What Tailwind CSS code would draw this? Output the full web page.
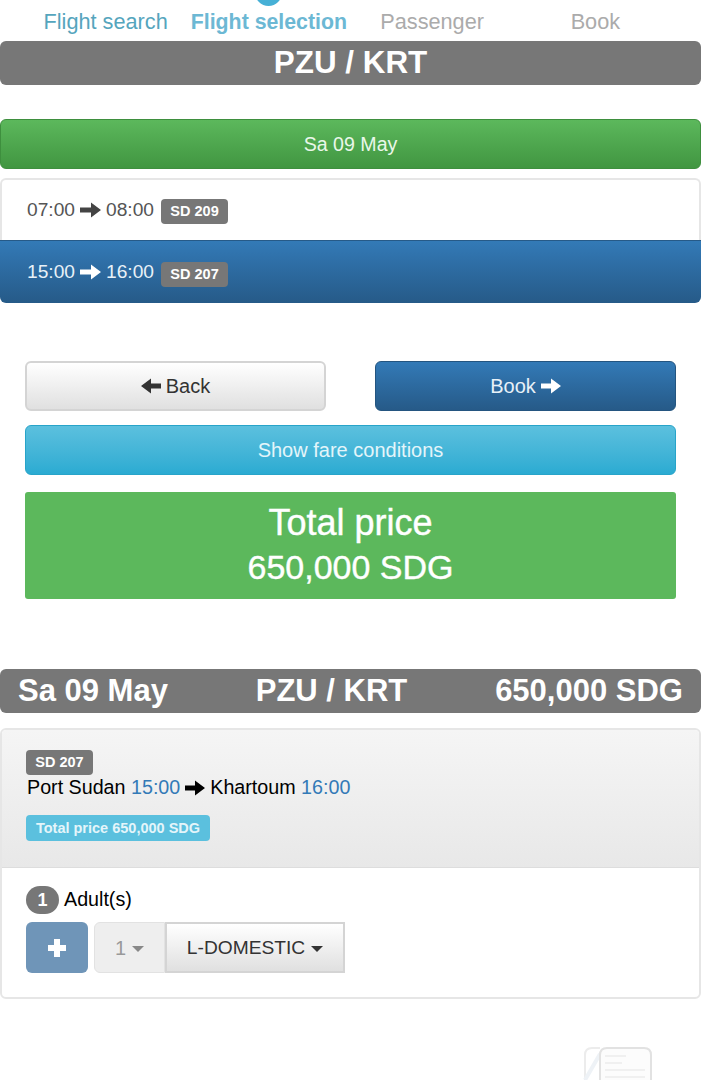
<!DOCTYPE html>
<html lang="en">
<head>
  <meta charset="UTF-8" />
  <meta name="viewport" content="width=device-width, initial-scale=1.0" />
  <title>Flight selection</title>
  <script src="https://cdn.jsdelivr.net/npm/@tailwindcss/browser@4"></script>
</head>
<body class="bg-white font-['Liberation_Sans',Arial,sans-serif] text-[20px] text-[#333] w-[701px] h-[1080px] overflow-hidden relative">

  <!-- Wizard steps -->
  <div class="absolute left-[255px] top-[-21px] w-[27px] h-[27px] rounded-full bg-[#46b0d6]"></div>
  <div class="grid grid-cols-4 px-6 h-[41px] pt-[8px] text-[21.7px] leading-[28px] text-center">
    <div class="text-[#55a5bd] whitespace-nowrap">Flight search</div>
    <div class="text-[#6cb8d4] font-bold text-[21.3px] whitespace-nowrap">Flight selection</div>
    <div class="text-[#ababab]">Passenger</div>
    <div class="text-[#ababab]">Book</div>
  </div>

  <div class="h-[44px] rounded-md bg-[#777] text-white text-[31.4px] font-bold leading-[44px] text-center">PZU / KRT</div>

  <!-- Date -->
  <div class="mt-[34px] h-[50px] rounded-md border border-[#3e8f3e] bg-gradient-to-b from-[#5cb85c] to-[#419641] text-[#e9f7e9] text-[19.6px] leading-[49px] text-center">Sa 09 May</div>

  <!-- Flights list -->
  <div class="mt-[9px] h-[125px] flex flex-col">
    <div class="h-[62px] flex items-center gap-[5px] pl-[25px] rounded-t-md border-t-2 border-x-2 border-[#e6e6e6] bg-white text-[#555] text-[19.2px]">
      <span>07:00</span>
      <svg class="w-[21px] h-[18px]" viewBox="0 0 21 18"><path d="M0 6.500h11V1.500l10 7.500-10 7.500v-5H0z" fill="#444"/></svg>
      <span>08:00</span>
      <span class="mt-[2px] ml-[2px] bg-[#777] text-white text-[14.5px] font-bold rounded-[4px] h-[25px] w-[67px] leading-[25px] text-center">SD 209</span>
    </div>
    <div class="h-[63px] pl-[27px] flex items-center gap-[5px] rounded-b-md border-t border-[#265a88] bg-gradient-to-b from-[#337ab7] to-[#265a88] text-[#e8f1f8] text-[19.2px]">
      <span>15:00</span>
      <svg class="w-[21px] h-[18px]" viewBox="0 0 21 18"><path d="M0 6.500h11V1.500l10 7.500-10 7.500v-5H0z" fill="#fff"/></svg>
      <span>16:00</span>
      <span class="mt-[4px] ml-[2px] bg-[#777] text-white text-[14.5px] font-bold rounded-[4px] h-[25px] w-[67px] leading-[25px] text-center">SD 207</span>
    </div>
  </div>

  <!-- Actions -->
  <div class="mt-[58px] px-[25px]">
    <div class="flex justify-between">
      <button class="w-[301px] h-[50px] rounded-md border-2 border-[#d4d4d4] bg-gradient-to-b from-white to-[#e0e0e0] text-[#333] flex items-center justify-center gap-[5px]">
        <svg class="w-[20px] h-[18px]" viewBox="0 0 20 18"><path d="M20 6.500H10V1.500L0 9l10 7.500v-5h10z" fill="#333"/></svg>
        <span>Back</span>
      </button>
      <button class="w-[301px] h-[50px] rounded-md border border-[#245580] bg-gradient-to-b from-[#337ab7] to-[#265a88] text-[#e8f1f8] flex items-center justify-center gap-[5px]">
        <span>Book</span>
        <svg class="w-[20px] h-[18px]" viewBox="0 0 20 18"><path d="M0 6.500h10V1.500L20 9l-10 7.500v-5H0z" fill="#fff"/></svg>
      </button>
    </div>
    <button class="mt-[14px] w-full h-[50px] rounded-md border border-[#28a4c9] bg-gradient-to-b from-[#5bc0de] to-[#2aabd2] text-[#e4f5fa] text-center">Show fare conditions</button>
    <div class="mt-[17px] h-[107px] rounded-[3px] bg-[#5cb85c] text-white text-[34px] leading-[45px] text-center pt-[8px] [-webkit-text-stroke:0.4px_white]">
      <div class="text-[36px]">Total price</div>
      <div>650,000 SDG</div>
    </div>
  </div>

  <!-- Summary -->
  <div class="mt-[70px] h-[44px] rounded-md bg-[#777] text-white text-[31px] font-bold leading-[44px] flex justify-between px-[18px]">
    <span>Sa 09 May</span>
    <span>PZU / KRT</span>
    <span>650,000 SDG</span>
  </div>

  <div class="mt-[15px] h-[271px] rounded-md border-2 border-[#e6e6e6] overflow-hidden">
    <div class="h-[138px] border-b border-[#ddd] bg-gradient-to-b from-[#f5f5f5] to-[#e8e8e8] pl-[24px] pt-[20px]">
      <div class="bg-[#777] text-white text-[14.5px] font-bold rounded-[4px] h-[25px] w-[67px] leading-[25px] text-center">SD 207</div>
      <div class="flex items-center gap-[5px] text-black text-[19.7px] h-[28px] -mt-[1px]">
        <span class="ml-[1px]">Port Sudan <span class="text-[#337ab7]">15:00</span></span>
        <svg class="w-[20px] h-[18px]" viewBox="0 0 20 18"><path d="M0 6.500h10V1.500L20 9l-10 7.500v-5H0z" fill="#000"/></svg>
        <span>Khartoum <span class="text-[#337ab7]">16:00</span></span>
      </div>
      <div class="mt-[13px] bg-[#5bc0de] text-[#e4f5fa] text-[14.5px] font-bold rounded-[4px] h-[26px] w-[184px] leading-[26px] text-center">Total price 650,000 SDG</div>
    </div>
    <div class="pl-[24px] pt-[18px]">
      <div class="flex items-center gap-[5px] text-black text-[19.7px] h-[28px]">
        <span class="w-[33px] h-[28px] rounded-full bg-[#777] text-white text-[18px] font-bold leading-[28px] text-center">1</span>
        <span>Adult(s)</span>
      </div>
      <div class="flex mt-[8px]">
        <button class="w-[62px] h-[51px] rounded-md bg-[#6f95b8] flex items-center justify-center">
          <svg class="w-[20px] h-[20px]" viewBox="0 0 20 20"><path d="M7 1h6v6h6v6h-6v6H7v-6H1V7h6z" fill="#fff"/></svg>
        </button>
        <div class="ml-[6px] w-[71px] h-[51px] rounded-l-md border border-[#e2e2e2] bg-[#eee] text-[#999] flex items-center justify-center gap-[6px]">
          <span class="pt-[1px]">1</span>
          <span class="mt-[2px] w-0 h-0 border-x-[6px] border-x-transparent border-t-[6px] border-t-[#888]"></span>
        </div>
        <div class="w-[180px] h-[51px] border-2 border-[#d4d4d4] bg-gradient-to-b from-white to-[#e0e0e0] text-[#333] text-[19.2px] flex items-center justify-center gap-[6px]">
          <span class="pt-[2px]">L-DOMESTIC</span>
          <span class="mt-[2px] w-0 h-0 border-x-[6px] border-x-transparent border-t-[6px] border-t-[#333]"></span>
        </div>
      </div>
    </div>
  </div>

  <!-- Faint watermark icon -->
  <svg class="absolute left-[582px] top-[1046px] w-[72px] h-[34px]" viewBox="0 0 72 34" fill="none">
    <path d="M18 2H10Q3 2 3 9V34" stroke="#ececec" stroke-width="2"/>
    <path d="M3 34L18 8" stroke="#eef2f6" stroke-width="4"/>
    <path d="M18 34V9Q18 2 25 2H62Q69 2 69 9V34" stroke="#e2e2e2" stroke-width="2" fill="#fcfcfc"/>
    <path d="M23 10H44M23 17H40M23 24H63M23 31H63" stroke="#f0f0f0" stroke-width="2"/>
  </svg>
</body>
</html>
